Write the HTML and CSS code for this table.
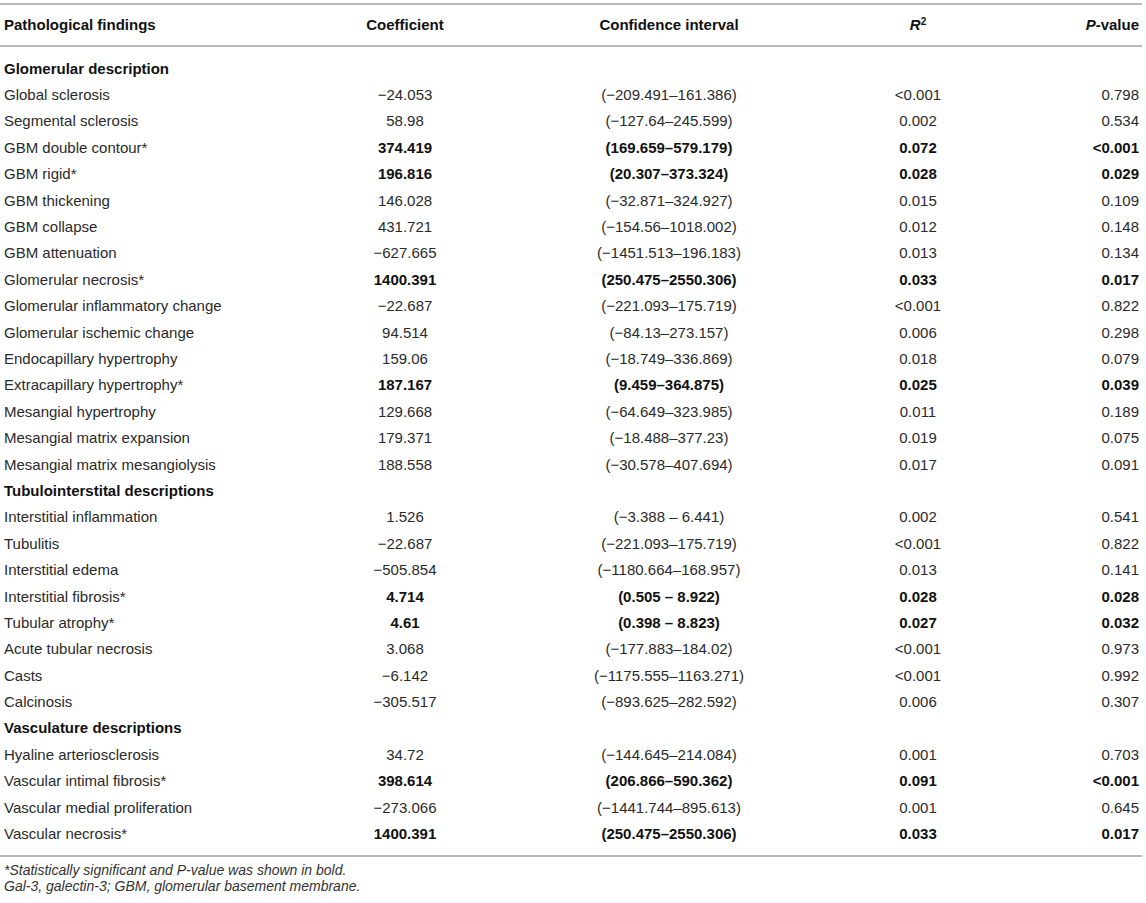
FILE: index.html
```html
<!DOCTYPE html>
<html lang="en">
<head>
<meta charset="utf-8">
<title>Pathological findings</title>
<link rel="stylesheet" href="styles.css">
</head>
<body>
<div class="wrap">
<table class="tbl">
  <colgroup>
    <col class="c1"><col class="c2"><col class="c3"><col class="c4"><col class="c5">
  </colgroup>
  <thead>
    <tr>
      <th class="name">Pathological findings</th>
      <th>Coefficient</th>
      <th>Confidence interval</th>
      <th><i>R</i><sup>2</sup></th>
      <th class="pv"><i>P</i>-value</th>
    </tr>
  </thead>
  <tbody>
    <tr class="sec first"><td class="name">Glomerular description</td><td></td><td></td><td></td><td></td></tr>
    <tr><td class="name">Global sclerosis</td><td>−24.053</td><td>(−209.491–161.386)</td><td>&lt;0.001</td><td class="pv">0.798</td></tr>
    <tr><td class="name">Segmental sclerosis</td><td>58.98</td><td>(−127.64–245.599)</td><td>0.002</td><td class="pv">0.534</td></tr>
    <tr class="sig"><td class="name">GBM double contour*</td><td>374.419</td><td>(169.659–579.179)</td><td>0.072</td><td class="pv">&lt;0.001</td></tr>
    <tr class="sig"><td class="name">GBM rigid*</td><td>196.816</td><td>(20.307–373.324)</td><td>0.028</td><td class="pv">0.029</td></tr>
    <tr><td class="name">GBM thickening</td><td>146.028</td><td>(−32.871–324.927)</td><td>0.015</td><td class="pv">0.109</td></tr>
    <tr><td class="name">GBM collapse</td><td>431.721</td><td>(−154.56–1018.002)</td><td>0.012</td><td class="pv">0.148</td></tr>
    <tr><td class="name">GBM attenuation</td><td>−627.665</td><td>(−1451.513–196.183)</td><td>0.013</td><td class="pv">0.134</td></tr>
    <tr class="sig"><td class="name">Glomerular necrosis*</td><td>1400.391</td><td>(250.475–2550.306)</td><td>0.033</td><td class="pv">0.017</td></tr>
    <tr><td class="name">Glomerular inflammatory change</td><td>−22.687</td><td>(−221.093–175.719)</td><td>&lt;0.001</td><td class="pv">0.822</td></tr>
    <tr><td class="name">Glomerular ischemic change</td><td>94.514</td><td>(−84.13–273.157)</td><td>0.006</td><td class="pv">0.298</td></tr>
    <tr><td class="name">Endocapillary hypertrophy</td><td>159.06</td><td>(−18.749–336.869)</td><td>0.018</td><td class="pv">0.079</td></tr>
    <tr class="sig"><td class="name">Extracapillary hypertrophy*</td><td>187.167</td><td>(9.459–364.875)</td><td>0.025</td><td class="pv">0.039</td></tr>
    <tr><td class="name">Mesangial hypertrophy</td><td>129.668</td><td>(−64.649–323.985)</td><td>0.011</td><td class="pv">0.189</td></tr>
    <tr><td class="name">Mesangial matrix expansion</td><td>179.371</td><td>(−18.488–377.23)</td><td>0.019</td><td class="pv">0.075</td></tr>
    <tr><td class="name">Mesangial matrix mesangiolysis</td><td>188.558</td><td>(−30.578–407.694)</td><td>0.017</td><td class="pv">0.091</td></tr>
    <tr class="sec"><td class="name">Tubulointerstital descriptions</td><td></td><td></td><td></td><td></td></tr>
    <tr><td class="name">Interstitial inflammation</td><td>1.526</td><td>(−3.388 – 6.441)</td><td>0.002</td><td class="pv">0.541</td></tr>
    <tr><td class="name">Tubulitis</td><td>−22.687</td><td>(−221.093–175.719)</td><td>&lt;0.001</td><td class="pv">0.822</td></tr>
    <tr><td class="name">Interstitial edema</td><td>−505.854</td><td>(−1180.664–168.957)</td><td>0.013</td><td class="pv">0.141</td></tr>
    <tr class="sig"><td class="name">Interstitial fibrosis*</td><td>4.714</td><td>(0.505 – 8.922)</td><td>0.028</td><td class="pv">0.028</td></tr>
    <tr class="sig"><td class="name">Tubular atrophy*</td><td>4.61</td><td>(0.398 – 8.823)</td><td>0.027</td><td class="pv">0.032</td></tr>
    <tr><td class="name">Acute tubular necrosis</td><td>3.068</td><td>(−177.883–184.02)</td><td>&lt;0.001</td><td class="pv">0.973</td></tr>
    <tr><td class="name">Casts</td><td>−6.142</td><td>(−1175.555–1163.271)</td><td>&lt;0.001</td><td class="pv">0.992</td></tr>
    <tr><td class="name">Calcinosis</td><td>−305.517</td><td>(−893.625–282.592)</td><td>0.006</td><td class="pv">0.307</td></tr>
    <tr class="sec"><td class="name">Vasculature descriptions</td><td></td><td></td><td></td><td></td></tr>
    <tr><td class="name">Hyaline arteriosclerosis</td><td>34.72</td><td>(−144.645–214.084)</td><td>0.001</td><td class="pv">0.703</td></tr>
    <tr class="sig"><td class="name">Vascular intimal fibrosis*</td><td>398.614</td><td>(206.866–590.362)</td><td>0.091</td><td class="pv">&lt;0.001</td></tr>
    <tr><td class="name">Vascular medial proliferation</td><td>−273.066</td><td>(−1441.744–895.613)</td><td>0.001</td><td class="pv">0.645</td></tr>
    <tr class="sig last"><td class="name">Vascular necrosis*</td><td>1400.391</td><td>(250.475–2550.306)</td><td>0.033</td><td class="pv">0.017</td></tr>
  </tbody>
</table>
<div class="notes">
  <p>*Statistically significant and P-value was shown in bold.</p>
  <p>Gal-3, galectin-3; GBM, glomerular basement membrane.</p>
</div>
</div>
</body>
</html>
```

FILE: styles.css
```css
html, body {
  margin: 0;
  padding: 0;
  background: #ffffff;
}

body {
  font-family: "Liberation Sans", Arial, Helvetica, sans-serif;
  color: #1f1f1f;
}

.wrap {
  width: 1142px;
  padding-top: 3px;
}

.tbl {
  width: 1142px;
  border-collapse: collapse;
  table-layout: fixed;
  font-size: 15px;
}

.c1 { width: 300px; }
.c2 { width: 210px; }
.c3 { width: 318px; }
.c4 { width: 180px; }
.c5 { width: 134px; }

.tbl thead tr {
  border-top: 2px solid #b8b8b8;
  border-bottom: 2px solid #b8b8b8;
}

.tbl th {
  font-weight: bold;
  height: 38px;
  padding: 0 0 2px 0;
  text-align: center;
  vertical-align: middle;
  color: #111;
}

.tbl th sup {
  font-size: 10px;
  line-height: 0;
  vertical-align: 5px;
}

.tbl td {
  height: 26.4px;
  line-height: 17px;
  padding: 0;
  text-align: center;
  vertical-align: middle;
  white-space: nowrap;
  color: #2a2a2a;
}

.tbl .name {
  text-align: left;
  padding-left: 4px;
}

.tbl .pv {
  text-align: right;
  padding-right: 3px;
}

.tbl tr.first td {
  padding-top: 8px;
}

.tbl tr.last td {
  padding-bottom: 8px;
}

.tbl tbody tr.last {
  border-bottom: 2px solid #b8b8b8;
}

.tbl tr.sec td {
  font-weight: bold;
  color: #111;
}

.tbl tr.sig td {
  font-weight: bold;
  color: #111;
}

.tbl tr.sig td.name {
  font-weight: normal;
  color: #2a2a2a;
}

.notes {
  padding: 5px 0 0 4px;
  font-size: 14px;
  font-style: italic;
  line-height: 16px;
  color: #333;
}

.notes p {
  margin: 0;
}
```
